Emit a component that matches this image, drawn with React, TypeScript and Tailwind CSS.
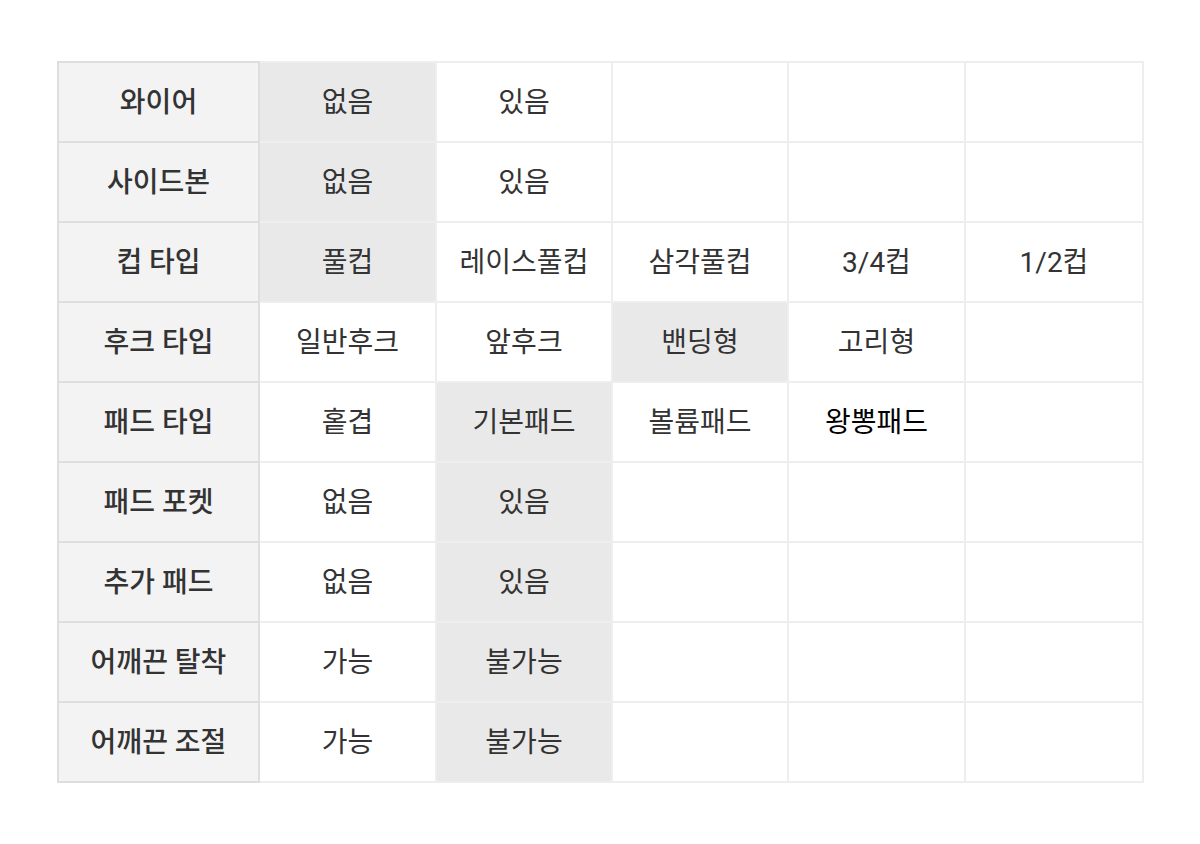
const rows: { label: string; cells: string[]; active: number }[] = [
  { label: "와이어", cells: ["없음", "있음", "", "", ""], active: 0 },
  { label: "사이드본", cells: ["없음", "있음", "", "", ""], active: 0 },
  { label: "컵 타입", cells: ["풀컵", "레이스풀컵", "삼각풀컵", "3/4컵", "1/2컵"], active: 0 },
  { label: "후크 타입", cells: ["일반후크", "앞후크", "밴딩형", "고리형", ""], active: 2 },
  { label: "패드 타입", cells: ["홑겹", "기본패드", "볼륨패드", "왕뽕패드", ""], active: 1 },
  { label: "패드 포켓", cells: ["없음", "있음", "", "", ""], active: 1 },
  { label: "추가 패드", cells: ["없음", "있음", "", "", ""], active: 1 },
  { label: "어깨끈 탈착", cells: ["가능", "불가능", "", "", ""], active: 1 },
  { label: "어깨끈 조절", cells: ["가능", "불가능", "", "", ""], active: 1 },
]

const colWidths = ["w-[201px]", "w-[177px]", "w-[176px]", "w-[176px]", "w-[177px]", "w-[178px]"]

export default function App() {
  return (
    <div
      className="min-h-[844px] w-[1200px] bg-white pl-[57px] pt-[61px]"
      style={{ fontFamily: 'Roboto, "Noto Sans CJK KR", "Noto Sans", sans-serif' }}
    >
      <table className="border-collapse border border-[#dcdcdc] text-[28px] leading-none">
        <colgroup>
          {colWidths.map((w, i) => (
            <col key={i} className={w} />
          ))}
        </colgroup>
        <tbody>
          {rows.map((row) => (
            <tr key={row.label} className="h-[80px]">
              <th className="border-2 border-[#dedede] bg-[#f3f3f3] pt-[2px] text-center font-medium text-[#333]">
                {row.label}
              </th>
              {row.cells.map((c, i) => (
                <td
                  key={i}
                  className={
                    "border-2 border-[#eeeeee] pt-[2px] text-center " +
                    (i === row.active ? "bg-[#e9e9e9] " : "bg-white ") +
                    (c === "왕뽕패드" ? "text-black" : "text-[#333]")
                  }
                >
                  {c}
                </td>
              ))}
            </tr>
          ))}
        </tbody>
      </table>
    </div>
  )
}
